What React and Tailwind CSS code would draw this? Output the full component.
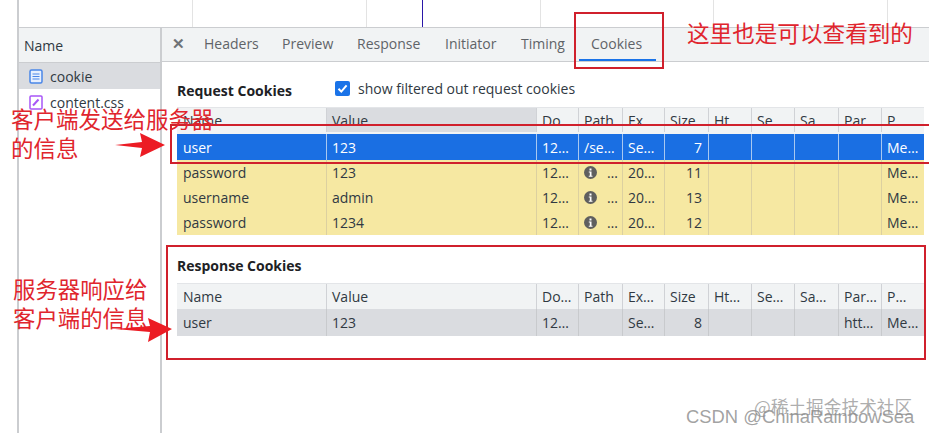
import React from 'react';

const cjk = "font-['Noto_Sans_CJK_SC',sans-serif]";
const widths = 'grid-cols-[150px_210px_42px_44px_42px_44px_43px_43px_44px_43px_42px]';

const tabs = ['Headers', 'Preview', 'Response', 'Initiator', 'Timing'];
const tabWidths = ['w-[78px]', 'w-[75px]', 'w-[88px]', 'w-[76px]', 'w-[58px]'];

function InfoIcon() {
  return (
    <svg width="13" height="13" viewBox="0 0 13 13" className="shrink-0">
      <circle cx="6.5" cy="6.5" r="6.5" fill="#5f5f5f" />
      <rect x="5.5" y="2.5" width="2" height="2" fill="#fff" />
      <path d="M4.8 5.6h2.7v4.1h1v1H4.8v-1h1V6.6h-1z" fill="#fff" />
    </svg>
  );
}

function Cell({ children, right, info, className = '' }) {
  return (
    <div className={`flex items-center gap-[10px] pl-[5px] first:pl-[6px] border-r last:border-r-0 whitespace-nowrap overflow-hidden ${right ? 'justify-end pr-[6px]' : 'pr-[5px]'} ${className}`}>
      {info && <InfoIcon />}
      {children}
    </div>
  );
}

function Row({ cells, rowClass, cellClass = '', info, sorted, header }) {
  return (
    <div className={`grid w-[747px] ${widths} ${rowClass}`}>
      {cells.map((c, i) => (
        <Cell
          key={i}
          right={!header && i === 5}
          info={info && i === 3}
          className={`${cellClass} ${sorted && i === 1 ? 'bg-[#dadce0]' : ''}`}
        >
          {c}
        </Cell>
      ))}
    </div>
  );
}

function Arrow({ className, d }) {
  return (
    <svg className={`absolute ${className}`} width="60" height="26" viewBox="0 0 60 26">
      <path d={d} fill="#ec1c24" />
    </svg>
  );
}

export default function App() {
  return (
    <div className="relative w-[929px] h-[433px] overflow-hidden bg-white text-[14px] text-[#303942] font-['Open_Sans',sans-serif]">
      {/* overview strip */}
      <div className="relative flex h-[28px] ml-[17px] border-l-2 border-b border-[#cbcdd0] box-border">
        {[174, 174, 174, 173, 174].map((w, i) => (
          <div key={i} className="border-r border-[#e3e3e3] h-full" style={{ width: w }} />
        ))}
        <div className="absolute left-[403px] top-0 w-px h-[27px] bg-[#2a17a8]" />
      </div>

      <div className="flex h-[405px] ml-[17px] border-l-2 border-[#cbcdd0]">
        {/* file list */}
        <div className="w-[143px] border-r-2 border-[#cbcdd0] shrink-0">
          <div className="flex items-center h-[35px] pl-[5px] bg-[#f1f3f4] border-b border-[#cbcdd0] text-[#303942]">Name</div>
          <div className="flex items-center h-[26px] pl-[10px] gap-[7px] bg-[#dadce0]">
            <svg width="14" height="15" viewBox="0 0 14 15" fill="none">
              <rect x="1" y="1" width="12" height="13" rx="1.5" stroke="#4a86e8" strokeWidth="1.5" fill="#e8f0fe" />
              <path d="M3.5 5h7M3.5 7.5h7M3.5 10h7" stroke="#4a86e8" strokeWidth="1.2" />
            </svg>
            <span>cookie</span>
          </div>
          <div className="flex items-center h-[26px] pl-[10px] gap-[7px]">
            <svg width="14" height="15" viewBox="0 0 14 15" fill="none">
              <rect x="1" y="1" width="12" height="13" rx="1" stroke="#a855f7" strokeWidth="1.5" />
              <path d="M4 10.5 9.5 4.5" stroke="#a855f7" strokeWidth="2" />
            </svg>
            <span>content.css</span>
          </div>
        </div>

        {/* details */}
        <div className="flex-1 min-w-0">
          <div className="flex items-center h-[34px] pb-[2px] bg-[#f1f3f4] border-b border-[#cbcdd0] text-[#5f6368] box-border">
            <span className="w-[42px] pl-[10px] text-[15px] font-bold leading-none text-[#6e7276]">✕</span>
            {tabs.map((t, i) => (
              <span key={t} className={tabWidths[i]}>{t}</span>
            ))}
            <span className="relative h-[33px] -mb-[2px] pb-[2px] flex items-center pl-[12px] pr-[14px]">
              Cookies
              <span className="absolute left-0 right-0 bottom-0 h-[2px] bg-[#1a73e8]" />
            </span>
          </div>

          <div className="pl-[15px]">
            <div className="flex items-center h-[45px] pt-[11px]">
              <span className="w-[158px] font-bold text-[#202124]">Request Cookies</span>
              <span className="flex items-center justify-center w-[15px] h-[15px] mb-[3px] rounded-[2px] bg-[#1a73e8] mr-[8px]">
                <svg width="11" height="11" viewBox="0 0 11 11" fill="none">
                  <path d="M1.5 5.8 4.3 8.6 9.6 2.4" stroke="#fff" strokeWidth="2" />
                </svg>
              </span>
              <span className="mb-[3px]">show filtered out request cookies</span>
            </div>

            <Row
              header
              sorted
              rowClass="h-[27px] pb-[2px] bg-[#f1f3f4] border-t border-[#e3e5e8]"
              cellClass="border-[#d0d2d6] text-[#303942]"
              cells={['Name', 'Value', 'Do', 'Path', 'Ex', 'Size', 'Ht', 'Se', 'Sa', 'Par', 'P']}
            />
            <Row
              rowClass="h-[26px] bg-[#1a6fe3] text-white"
              cellClass="border-[#a9c8f0]"
              cells={['user', '123', '12…', '/se…', 'Se…', '7', '', '', '', '', 'Me…']}
            />
            <Row
              rowClass="h-[25px] bg-[#f6e8a2]"
              cellClass="border-[#dcd0a0]"
              info
              cells={['password', '123', '12…', '…', '20…', '11', '', '', '', '', 'Me…']}
            />
            <Row
              rowClass="h-[25px] bg-[#f6e8a2]"
              cellClass="border-[#dcd0a0]"
              info
              cells={['username', 'admin', '12…', '…', '20…', '13', '', '', '', '', 'Me…']}
            />
            <Row
              rowClass="h-[25px] bg-[#f6e8a2]"
              cellClass="border-[#dcd0a0]"
              info
              cells={['password', '1234', '12…', '…', '20…', '12', '', '', '', '', 'Me…']}
            />

            <div className="flex items-end h-[41px] font-bold text-[#202124]">Response Cookies</div>
            <div className="h-[7px]" />
            <Row
              header
              rowClass="h-[26px] bg-[#f1f3f4] border-t border-[#e3e5e8]"
              cellClass="border-[#d0d2d6]"
              cells={['Name', 'Value', 'Do…', 'Path', 'Ex…', 'Size', 'Ht…', 'Se…', 'Sa…', 'Par…', 'P…']}
            />
            <Row
              rowClass="h-[27px] bg-[#dadce0]"
              cellClass="border-[#c8cacd]"
              cells={['user', '123', '12…', '', 'Se…', '8', '', '', '', 'htt…', 'Me…']}
            />
          </div>
        </div>
      </div>

      {/* red annotations drawn over the screenshot */}
      <div className="absolute left-[574px] top-[12px] w-[90px] h-[57px] border-2 border-[#d0202c]" />
      <div className="absolute left-[170px] top-[124px] w-[770px] h-[40px] border-2 border-[#d0202c]" />
      <div className="absolute left-[166px] top-[245px] w-[760px] h-[115px] border-2 border-[#d0202c]" />

      <div className={`absolute left-[687px] top-[16px] text-[22.6px] leading-[34px] whitespace-nowrap text-[#e0252d] ${cjk}`}>这里也是可以查看到的</div>
      <div className={`absolute left-[11px] top-[104px] text-[22.5px] leading-[29px] whitespace-nowrap text-[#e0252d] ${cjk}`}>
        客户端发送给服务器<br />的信息
      </div>
      <div className={`absolute left-[13px] top-[274px] text-[22.4px] leading-[29px] whitespace-nowrap text-[#e0252d] ${cjk}`}>
        服务器响应给<br />客户端的信息
      </div>

      <Arrow className="left-[112px] top-[133px]" d="M3 12 30 9 28 0 53 12 28 24 30 15z" />
      <Arrow className="left-[114px] top-[317px]" d="M1 12 36 9 34 1 58 12 34 25 36 15z" />

      {/* watermarks */}
      <div className={`absolute left-[754px] top-[394px] text-[17.7px] leading-[24px] whitespace-nowrap text-[#8a8a8a]/70 ${cjk}`}>@稀土掘金技术社区</div>
      <div className="absolute left-[686px] top-[405px] text-[18.4px] leading-[24px] whitespace-nowrap text-[#8a8a8a]/80 font-['Liberation_Sans',sans-serif]">CSDN @ChinaRainbowSea</div>
    </div>
  );
}
